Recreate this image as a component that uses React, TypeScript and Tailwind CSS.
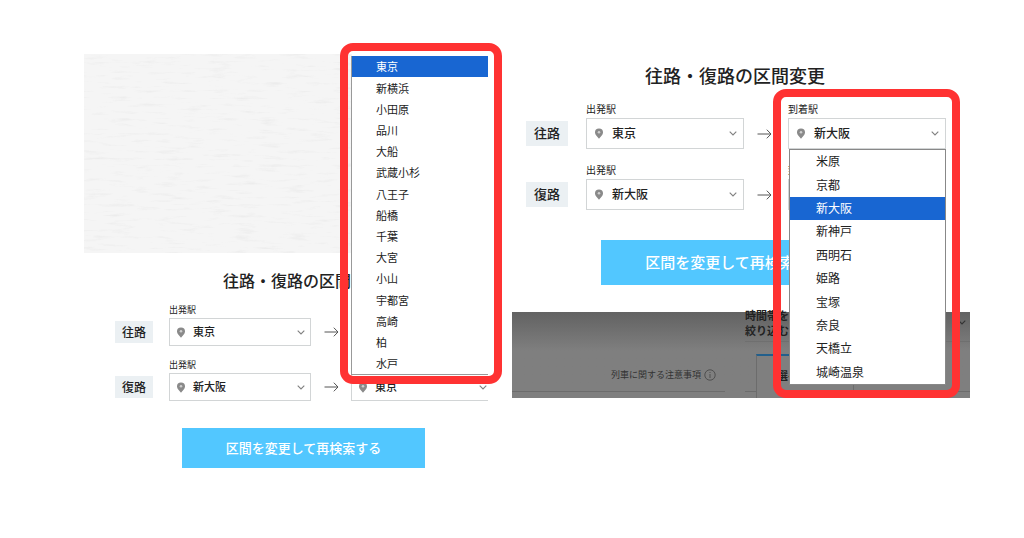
import type { ReactNode } from "react";

const departures = [
  "東京", "新横浜", "小田原", "品川", "大船", "武蔵小杉", "八王子", "船橋",
  "千葉", "大宮", "小山", "宇都宮", "高崎", "柏", "水戸",
];

const arrivals = [
  "米原", "京都", "新大阪", "新神戸", "西明石", "姫路", "宝塚", "奈良", "天橋立", "城崎温泉",
];

type Size = "sm" | "lg";

function PinIcon() {
  return (
    <svg viewBox="0 0 10 12" className="h-[11px] w-[10px]" aria-hidden="true">
      <path d="M5 0.5a4.4 4.4 0 0 0-4.4 4.4C0.6 7.7 3.4 9.6 5 11.6 6.6 9.6 9.4 7.7 9.4 4.9A4.4 4.4 0 0 0 5 0.5Z" fill="#8a8a8a" />
      <circle cx="5" cy="4.7" r="1.4" fill="#cfcfcf" />
    </svg>
  );
}

function ChevronIcon({ stroke = "#808080" }: { stroke?: string }) {
  return (
    <svg viewBox="0 0 8 5" className="h-[5px] w-2" fill="none" stroke={stroke} strokeWidth="1.1" aria-hidden="true">
      <path d="M0.7 0.7 4 4 7.3 0.7" />
    </svg>
  );
}

function ArrowIcon() {
  return (
    <svg viewBox="0 0 15 10" className="h-[10px] w-[15px]" fill="none" stroke="#555" strokeWidth="1" aria-hidden="true">
      <path d="M0.5 5h13.5M9.8 0.7 14 5 9.8 9.3" />
    </svg>
  );
}

function StationSelect({ id, label, value, size }: { id: string; label: string; value: string; size: Size }) {
  const lg = size === "lg";
  return (
    <div className={lg ? "w-[158px] shrink-0" : "w-[142px] shrink-0"}>
      <label
        htmlFor={id}
        className={lg ? "block h-[17px] text-[10px] leading-[16px]" : "block h-[15px] text-[9px] leading-[14px]"}
      >
        {label}
      </label>
      <div className="relative">
        <select
          id={id}
          defaultValue={value}
          className={
            lg
              ? "block h-[31px] w-full appearance-none border border-[#d2d5d6] bg-white pb-px pl-[25px] text-[12px] font-medium text-[#222]"
              : "block h-7 w-full appearance-none border border-[#d2d5d6] bg-white pb-[2px] pl-[23px] text-[11px] font-medium text-[#222]"
          }
        >
          <option>{value}</option>
        </select>
        <span
          className={
            lg
              ? "pointer-events-none absolute inset-0 flex items-center justify-between pr-[7px] pl-2"
              : "pointer-events-none absolute inset-0 flex items-center justify-between pr-[6px] pl-[7px]"
          }
        >
          <PinIcon />
          <ChevronIcon />
        </span>
      </div>
    </div>
  );
}

function RouteRow({ name, from, to, size }: { name: string; from: string; to: string; size: Size }) {
  const lg = size === "lg";
  const id = `${size}-${name}`;
  return (
    <div className="flex items-end">
      <span
        className={
          lg
            ? "mr-[18px] mb-[3px] flex h-[25px] w-[42px] shrink-0 items-center justify-center bg-[#ebf0f3] pb-[2px] text-[13px] font-medium"
            : "mr-4 mb-[3px] flex h-[22px] w-[38px] shrink-0 items-center justify-center bg-[#ebf0f3] pb-px text-[12px] font-medium"
        }
      >
        {name}
      </span>
      <StationSelect id={`${id}-from`} label="出発駅" value={from} size={size} />
      <span
        className={
          lg
            ? "flex h-[31px] w-11 shrink-0 items-center justify-center pr-1"
            : "flex h-7 w-10 shrink-0 items-center justify-center"
        }
      >
        <ArrowIcon />
      </span>
      <StationSelect id={`${id}-to`} label="到着駅" value={to} size={size} />
    </div>
  );
}

function OptionList({
  items,
  selected,
  className,
  optionClass,
}: {
  items: string[];
  selected: string;
  className: string;
  optionClass: string;
}) {
  return (
    <ul role="listbox" aria-label="駅" className={`absolute flex flex-col bg-white ${className}`}>
      {items.map((item) => {
        const active = item === selected;
        return (
          <li
            key={item}
            role="option"
            aria-selected={active}
            className={`flex flex-1 items-center ${optionClass} ${active ? "bg-[#1866d2] text-white" : "text-[#222]"}`}
          >
            {item}
          </li>
        );
      })}
    </ul>
  );
}

function Highlight({ className }: { className: string }) {
  return <div className={`pointer-events-none absolute rounded-[13px] border-8 border-[#ff3232] ${className}`} />;
}

function Texture() {
  return (
    <svg className="block h-[199px] w-[268px]" aria-hidden="true">
      <filter id="grain" x="0" y="0" width="100%" height="100%">
        <feTurbulence type="fractalNoise" baseFrequency="0.04 0.28" numOctaves="4" seed="23" />
        <feColorMatrix values="0 0 0 0 0.55  0 0 0 0 0.55  0 0 0 0 0.55  2.6 0 0 0 -1.45" />
      </filter>
      <rect width="100%" height="100%" fill="#f5f5f5" />
      <rect width="100%" height="100%" filter="url(#grain)" opacity="0.18" />
    </svg>
  );
}

function Title({ children, className }: { children: ReactNode; className: string }) {
  return <h2 className={`text-center font-medium whitespace-nowrap ${className}`}>{children}</h2>;
}

function DeparturePanel() {
  return (
    <section className="relative w-[404px] shrink-0">
      <div className="overflow-hidden">
        <Texture />
        <Title className="mt-[15px] pl-[34px] text-[16px] leading-6">往路・復路の区間変更</Title>
        <div className="mt-[11px] flex flex-col gap-3 pl-[31px]">
          <RouteRow name="往路" from="東京" to="新大阪" size="sm" />
          <RouteRow name="復路" from="新大阪" to="東京" size="sm" />
        </div>
        <button
          type="button"
          className="mt-[27px] ml-[98px] block h-10 w-[243px] bg-[#52c7ff] pb-px text-[13px] font-medium text-white"
        >
          区間を変更して再検索する
        </button>
      </div>
      <OptionList
        items={departures}
        selected="東京"
        className="top-[2px] left-[267px] h-[319px] w-[137px] border-b border-l border-[#999] text-[11px]"
        optionClass="pl-6"
      />
      <Highlight className="-top-[11px] left-64 h-[341px] w-[162px]" />
    </section>
  );
}

function TrainFilter() {
  return (
    <div className="flex h-[86px] items-start bg-[#7f7f7f] bg-linear-to-b from-[#626262] to-[#7f7f7f] to-45% text-[#333]">
      <p className="flex h-20 w-[213px] items-end justify-end gap-[3px] border-b border-[#6c6c6c] pr-[9px] pb-[9px] text-[9px] leading-[14px]">
        列車に関する注意事項
        <svg viewBox="0 0 12 12" className="mb-px size-3" fill="none" stroke="#444" strokeWidth="0.8" aria-hidden="true">
          <circle cx="6" cy="6" r="5.2" />
          <path d="M6 5v4M6 3v1" />
        </svg>
      </p>
      <div className="ml-5 flex-1">
        <div className="flex h-[30px] items-end justify-between border-b border-[#6f6f6f] pr-1">
          <p className="pb-[3px] text-[11px] leading-[15px] font-bold text-[#222]">
            時間帯を
            <br />
            絞り込む
          </p>
          <span className="mb-4">
            <ChevronIcon stroke="#333" />
          </span>
        </div>
        <div className="mt-3 flex">
          <span className="h-[38px] w-[11px] border-b border-[#6c6c6c]" />
          <span className="flex h-11 w-[98px] items-center border-x border-t-2 border-x-[#6c6c6c] border-t-[#225f8c] pb-1 pl-5 text-[11px] font-bold text-[#222]">
            選べる
          </span>
          <span className="h-[38px] flex-1 border-b border-[#6c6c6c]" />
        </div>
      </div>
    </div>
  );
}

function ArrivalPanel() {
  return (
    <section className="relative w-[458px] shrink-0">
      <div className="bg-white pb-[27px]">
        <Title className="pt-2 pr-3 text-[18px] leading-[26px]">往路・復路の区間変更</Title>
        <div className="mt-[13px] flex flex-col gap-[13px] pl-[14px]">
          <RouteRow name="往路" from="東京" to="新大阪" size="lg" />
          <RouteRow name="復路" from="新大阪" to="東京" size="lg" />
        </div>
        <button
          type="button"
          className="mt-[30px] ml-[89px] block h-[45px] w-[268px] bg-[#52c7ff] pb-px text-[15px] font-medium text-white"
        >
          区間を変更して再検索する
        </button>
      </div>
      <TrainFilter />
      <OptionList
        items={arrivals}
        selected="新大阪"
        className="top-[95px] left-[277px] h-[236px] w-[157px] border border-[#888] text-[12px]"
        optionClass="pl-[26px] pb-px"
      />
      <Highlight className="top-[35px] left-[261px] h-[309px] w-[187px]" />
    </section>
  );
}

export default function App() {
  return (
    <main className="flex min-h-screen items-start justify-center gap-6 overflow-hidden bg-white pt-[54px] pr-[54px] pl-[84px] font-['Noto_Sans_CJK_JP',sans-serif] text-[#222]">
      <DeparturePanel />
      <ArrivalPanel />
    </main>
  );
}
